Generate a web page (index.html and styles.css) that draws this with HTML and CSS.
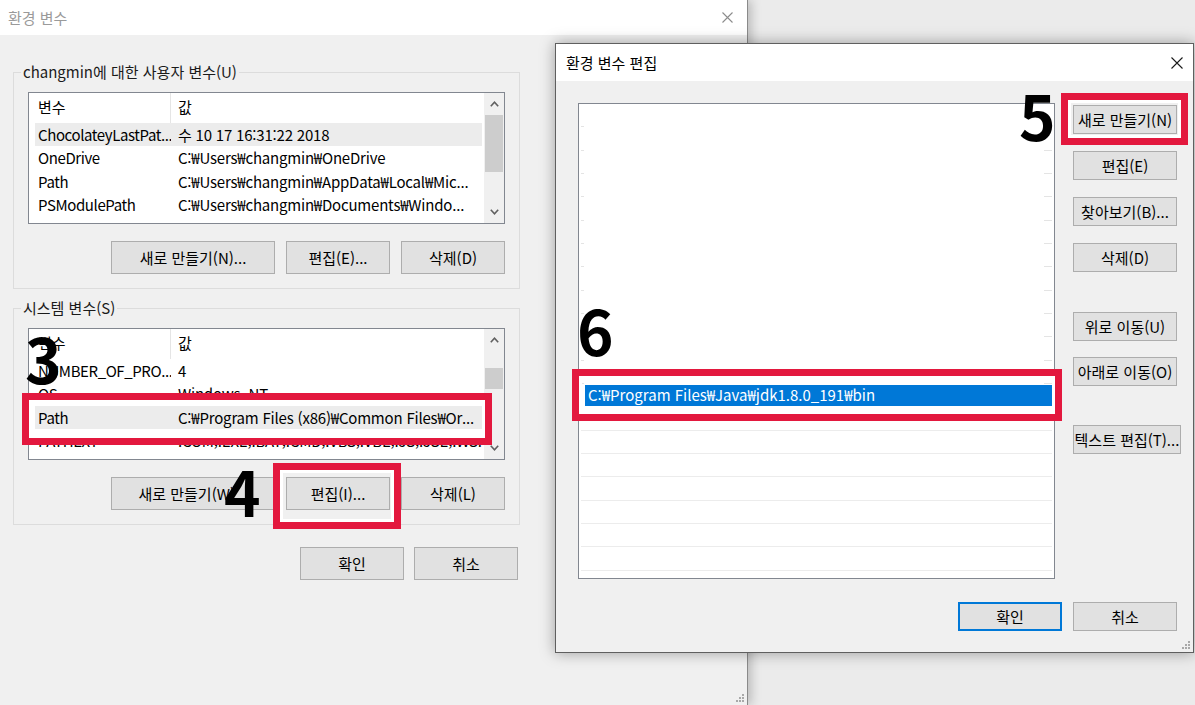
FILE: index.html
```html
<!DOCTYPE html>
<html lang="ko">
<head>
<meta charset="utf-8">
<title>환경 변수</title>
<link rel="stylesheet" href="styles.css">
</head>
<body>
<div class="desk">

  <section class="win win-env">
    <header class="titlebar inactive">
      <span class="title">환경 변수</span>
      <svg class="close" width="11" height="11" viewBox="0 0 11 11"><path d="M0.5 0.5 L10.5 10.5 M10.5 0.5 L0.5 10.5" stroke="#8c8c8c" stroke-width="1.1" fill="none"/></svg>
    </header>
    <div class="env-body">
      <div class="env-col">
        <fieldset class="group">
          <legend>changmin에 대한 사용자 변수(U)</legend>
          <div class="listview">
            <div class="lv-main">
              <div class="lv-head"><span class="c1">변수</span><span class="c2">값</span></div>
              <div class="lv-rows">
                <div class="lv-row sel"><span class="c1">ChocolateyLastPat...</span><span class="c2">수 10 17 16:31:22 2018</span></div>
                <div class="lv-row"><span class="c1">OneDrive</span><span class="c2">C:₩Users₩changmin₩OneDrive</span></div>
                <div class="lv-row"><span class="c1">Path</span><span class="c2">C:₩Users₩changmin₩AppData₩Local₩Mic...</span></div>
                <div class="lv-row"><span class="c1">PSModulePath</span><span class="c2">C:₩Users₩changmin₩Documents₩Windo...</span></div>
              </div>
            </div>
            <div class="vscroll">
              <div class="sb-btn"><svg width="9" height="6" viewBox="0 0 9 6"><polyline points="0.8,5.2 4.5,1.2 8.2,5.2" fill="none" stroke="#606060" stroke-width="1.6"/></svg></div>
              <div class="thumb thumb-a"></div>
              <div class="sb-btn sb-down"><svg width="9" height="6" viewBox="0 0 9 6"><polyline points="0.8,0.8 4.5,4.8 8.2,0.8" fill="none" stroke="#606060" stroke-width="1.6"/></svg></div>
            </div>
          </div>
          <div class="btnrow">
            <button class="btn w164">새로 만들기(N)...</button>
            <button class="btn">편집(E)...</button>
            <button class="btn">삭제(D)</button>
          </div>
        </fieldset>

        <fieldset class="group group-sys">
          <legend>시스템 변수(S)</legend>
          <div class="listview">
            <div class="lv-main">
              <div class="lv-head"><span class="c1">변수</span><span class="c2">값</span></div>
              <div class="lv-rows">
                <div class="lv-row"><span class="c1">NUMBER_OF_PRO...</span><span class="c2">4</span></div>
                <div class="lv-row"><span class="c1">OS</span><span class="c2">Windows_NT</span></div>
                <div class="lv-row sel"><span class="c1">Path</span><span class="c2">C:₩Program Files (x86)₩Common Files₩Or...</span></div>
                <div class="lv-row"><span class="c1">PATHEXT</span><span class="c2">.COM;.EXE;.BAT;.CMD;.VBS;.VBE;.JS;.JSE;.WS...</span></div>
              </div>
            </div>
            <div class="vscroll">
              <div class="sb-btn"><svg width="9" height="6" viewBox="0 0 9 6"><polyline points="0.8,5.2 4.5,1.2 8.2,5.2" fill="none" stroke="#606060" stroke-width="1.6"/></svg></div>
              <div class="thumb thumb-b"></div>
              <div class="sb-btn sb-down"><svg width="9" height="6" viewBox="0 0 9 6"><polyline points="0.8,0.8 4.5,4.8 8.2,0.8" fill="none" stroke="#606060" stroke-width="1.6"/></svg></div>
            </div>
          </div>
          <div class="btnrow">
            <button class="btn w164">새로 만들기(W)...</button>
            <button class="btn">편집(I)...</button>
            <button class="btn">삭제(L)</button>
          </div>
        </fieldset>

        <div class="dlg-foot">
          <button class="btn">확인</button>
          <button class="btn">취소</button>
        </div>
      </div>
    </div>
    <svg class="grip" width="8" height="8" viewBox="0 0 8 8"><g fill="#a8a8a8"><rect x="6" y="0" width="2" height="2"/><rect x="3" y="3" width="2" height="2"/><rect x="6" y="3" width="2" height="2"/><rect x="0" y="6" width="2" height="2"/><rect x="3" y="6" width="2" height="2"/><rect x="6" y="6" width="2" height="2"/></g></svg>
  </section>

  <section class="win win-edit">
    <header class="titlebar">
      <span class="title">환경 변수 편집</span>
      <svg class="close" width="12" height="12" viewBox="0 0 12 12"><path d="M0.5 0.5 L11.5 11.5 M11.5 0.5 L0.5 11.5" stroke="#1a1a1a" stroke-width="1.1" fill="none"/></svg>
    </header>
    <div class="edit-body">
      <div class="edit-main">
        <div class="pathlist">
          <div class="prow ghost"></div>
          <div class="prow ghost"></div>
          <div class="prow ghost"></div>
          <div class="prow ghost"></div>
          <div class="prow ghost"></div>
          <div class="prow ghost"></div>
          <div class="prow ghost"></div>
          <div class="prow ghost"></div>
          <div class="prow ghost"></div>
          <div class="prow ghost"></div>
          <div class="prow ghost"></div>
          <div class="prow ghost"></div>
          <div class="prow edit"><span class="seltext">C:₩Program Files₩Java₩jdk1.8.0_191₩bin</span></div>
          <div class="prow line"></div>
          <div class="prow line"></div>
          <div class="prow line"></div>
          <div class="prow line"></div>
          <div class="prow line"></div>
          <div class="prow line"></div>
          <div class="prow line"></div>
          <div class="prow line"></div>
        </div>
        <div class="side">
          <button class="btn sbtn">새로 만들기(N)</button>
          <button class="btn sbtn g17">편집(E)</button>
          <button class="btn sbtn g17">찾아보기(B)...</button>
          <button class="btn sbtn g17">삭제(D)</button>
          <button class="btn sbtn g40">위로 이동(U)</button>
          <button class="btn sbtn g16">아래로 이동(O)</button>
          <button class="btn sbtn g39 wide">텍스트 편집(T)...</button>
        </div>
      </div>
      <div class="edit-foot">
        <button class="btn sbtn focus">확인</button>
        <button class="btn sbtn">취소</button>
      </div>
    </div>
    <svg class="grip" width="8" height="8" viewBox="0 0 8 8"><g fill="#a8a8a8"><rect x="6" y="0" width="2" height="2"/><rect x="3" y="3" width="2" height="2"/><rect x="6" y="3" width="2" height="2"/><rect x="0" y="6" width="2" height="2"/><rect x="3" y="6" width="2" height="2"/><rect x="6" y="6" width="2" height="2"/></g></svg>
  </section>

  <div class="mark m3"></div>
  <div class="mark m4"></div>
  <div class="mark m5"></div>
  <div class="mark m6"></div>
  <div class="num n3">3</div>
  <div class="num n4">4</div>
  <div class="num n5">5</div>
  <div class="num n6">6</div>
</div>
</body>
</html>
```

FILE: styles.css
```css
* { box-sizing: border-box; }
html, body { margin: 0; padding: 0; }
body {
  width: 1195px;
  height: 705px;
  overflow: hidden;
  background: #ebebeb;
  font-family: "Noto Sans CJK KR", "Noto Sans", sans-serif;
  font-size: 15px;
  color: #000;
}
.desk { position: relative; width: 1195px; height: 705px; overflow: hidden; }

.win {
  position: absolute;
  background: #f0f0f0;
  display: flex;
  flex-direction: column;
}
.win-env {
  left: 0;
  top: 0;
  width: 748px;
  height: 705px;
  border-right: 1px solid #8a8a8a;
  box-shadow: 3px 0 10px rgba(0, 0, 0, 0.22);
}
.titlebar {
  flex: none;
  background: #fff;
  display: flex;
  align-items: center;
  justify-content: space-between;
}
.win-env .titlebar { height: 35px; padding: 0 14px 0 8px; }
.inactive .title { color: #9a9a9a; }
.close { display: block; }

.env-body { padding: 27px 0 0 13px; }
.env-col { width: 507px; }

.group {
  margin: 0;
  padding: 10px 14px 14px;
  border: 1px solid #dcdcdc;
  min-width: 0;
}
.group legend {
  margin-left: -7px;
  padding: 0 2px;
  line-height: 20px;
  color: #1a1a1a;
}
.group-sys { margin-top: 9px; }

.listview {
  display: flex;
  height: 132px;
  border: 1px solid #828790;
  background: #fff;
  overflow: hidden;
}
.lv-main { flex: 1; min-width: 0; overflow: hidden; }
.lv-head { display: flex; height: 30px; }
.lv-head .c1 {
  width: 142px;
  padding-left: 9px;
  line-height: 27px;
  border-right: 1px solid #e5e5e5;
}
.lv-head .c2 { padding-left: 7px; line-height: 27px; }
.lv-rows { padding: 0 2px 0 6px; }
.lv-row {
  display: flex;
  height: calc(70px / 3);
  line-height: 24px;
  letter-spacing: -0.2px;
  white-space: nowrap;
}
.lv-row .c1 {
  flex: none;
  width: 136px;
  padding-left: 3px;
  letter-spacing: -0.4px;
  overflow: hidden;
}
.lv-row .c2 { flex: 1; padding-left: 7px; overflow: hidden; }
.lv-row.sel { background: #ececec; }

.vscroll {
  flex: none;
  width: 20px;
  background: #f0f0f0;
  display: flex;
  flex-direction: column;
}
.sb-btn {
  height: 22px;
  display: flex;
  align-items: center;
  justify-content: center;
  flex: none;
}
.sb-down { margin-top: auto; }
.thumb { margin: 0 1px; background: #cdcdcd; flex: none; }
.thumb-a { height: 57px; }
.thumb-b { margin-top: 17px; height: 21px; }

.btn {
  font-family: inherit;
  font-size: 15px;
  line-height: 18px;
  color: #000;
  background: #e1e1e1;
  border: 1px solid #adadad;
  padding: 0;
  margin: 0;
  width: 104px;
  height: 33px;
  white-space: nowrap;
}
.w164 { width: 164px; }
.btnrow {
  display: flex;
  justify-content: flex-end;
  gap: 11px;
  margin-top: 17px;
}
.dlg-foot {
  display: flex;
  justify-content: flex-end;
  gap: 10px;
  margin-top: 22px;
  padding-right: 2px;
}

.grip { position: absolute; right: 3px; bottom: 3px; }

/* edit dialog */
.win-edit {
  left: 555px;
  top: 43px;
  width: 639px;
  height: 610px;
  border: 1px solid #5f5f5f;
  box-shadow: 0 0 14px rgba(0, 0, 0, 0.35);
}
.win-edit .titlebar { height: 37px; padding: 0 10px 0 10px; }
.edit-body {
  flex: 1;
  display: flex;
  flex-direction: column;
  padding: 22px 16px 0 22px;
}
.edit-main { display: flex; gap: 18px; }
.pathlist {
  flex: none;
  width: 477px;
  height: 476px;
  border: 1px solid #828790;
  background: #fff;
  overflow: hidden;
}
.prow { height: calc(70px / 3); margin: 0 2px; }
.prow.ghost {
  background:
    linear-gradient(#e4e4e4, #e4e4e4) left bottom / 3px 1px no-repeat,
    linear-gradient(#e4e4e4, #e4e4e4) right bottom / 8px 1px no-repeat;
}
.prow.line { border-bottom: 1px solid #ececec; }
.prow.edit { padding: 1px 0 1px 4px; }
.seltext {
  display: block;
  height: 100%;
  background: #0078d7;
  color: #fff;
  padding-left: 3px;
  line-height: 20px;
  white-space: nowrap;
}
.side {
  flex: none;
  width: 104px;
  padding-top: 2px;
  display: flex;
  flex-direction: column;
  align-items: flex-start;
}
.sbtn { height: 29px; }
.g17 { margin-top: 17px; }
.g40 { margin-top: 40px; }
.g16 { margin-top: 16px; }
.g39 { margin-top: 39px; }
.wide { width: 108px; }
.edit-foot {
  display: flex;
  justify-content: flex-end;
  gap: 11px;
  margin-top: 23px;
}
.focus { border: 2px solid #0078d7; }

/* annotations */
.mark {
  position: absolute;
  border: 7px solid #e3183e;
  box-shadow: inset 0 0 0 3px #fff;
}
.m3 { left: 22px; top: 393px; width: 470px; height: 52px; }
.m4 { left: 273px; top: 463px; width: 128px; height: 66px; }
.m5 { left: 1061px; top: 93px; width: 127px; height: 52px; }
.m6 { left: 572px; top: 369px; width: 490px; height: 52px; }

.num {
  position: absolute;
  font-family: "Noto Sans CJK KR", sans-serif;
  font-weight: 700;
  font-size: 62px;
  line-height: 1;
  color: #000;
}
.n3 { left: 25px; top: 326px; }
.n4 { left: 224px; top: 459px; }
.n5 { left: 1019px; top: 83px; }
.n6 { left: 577px; top: 298px; }
```
